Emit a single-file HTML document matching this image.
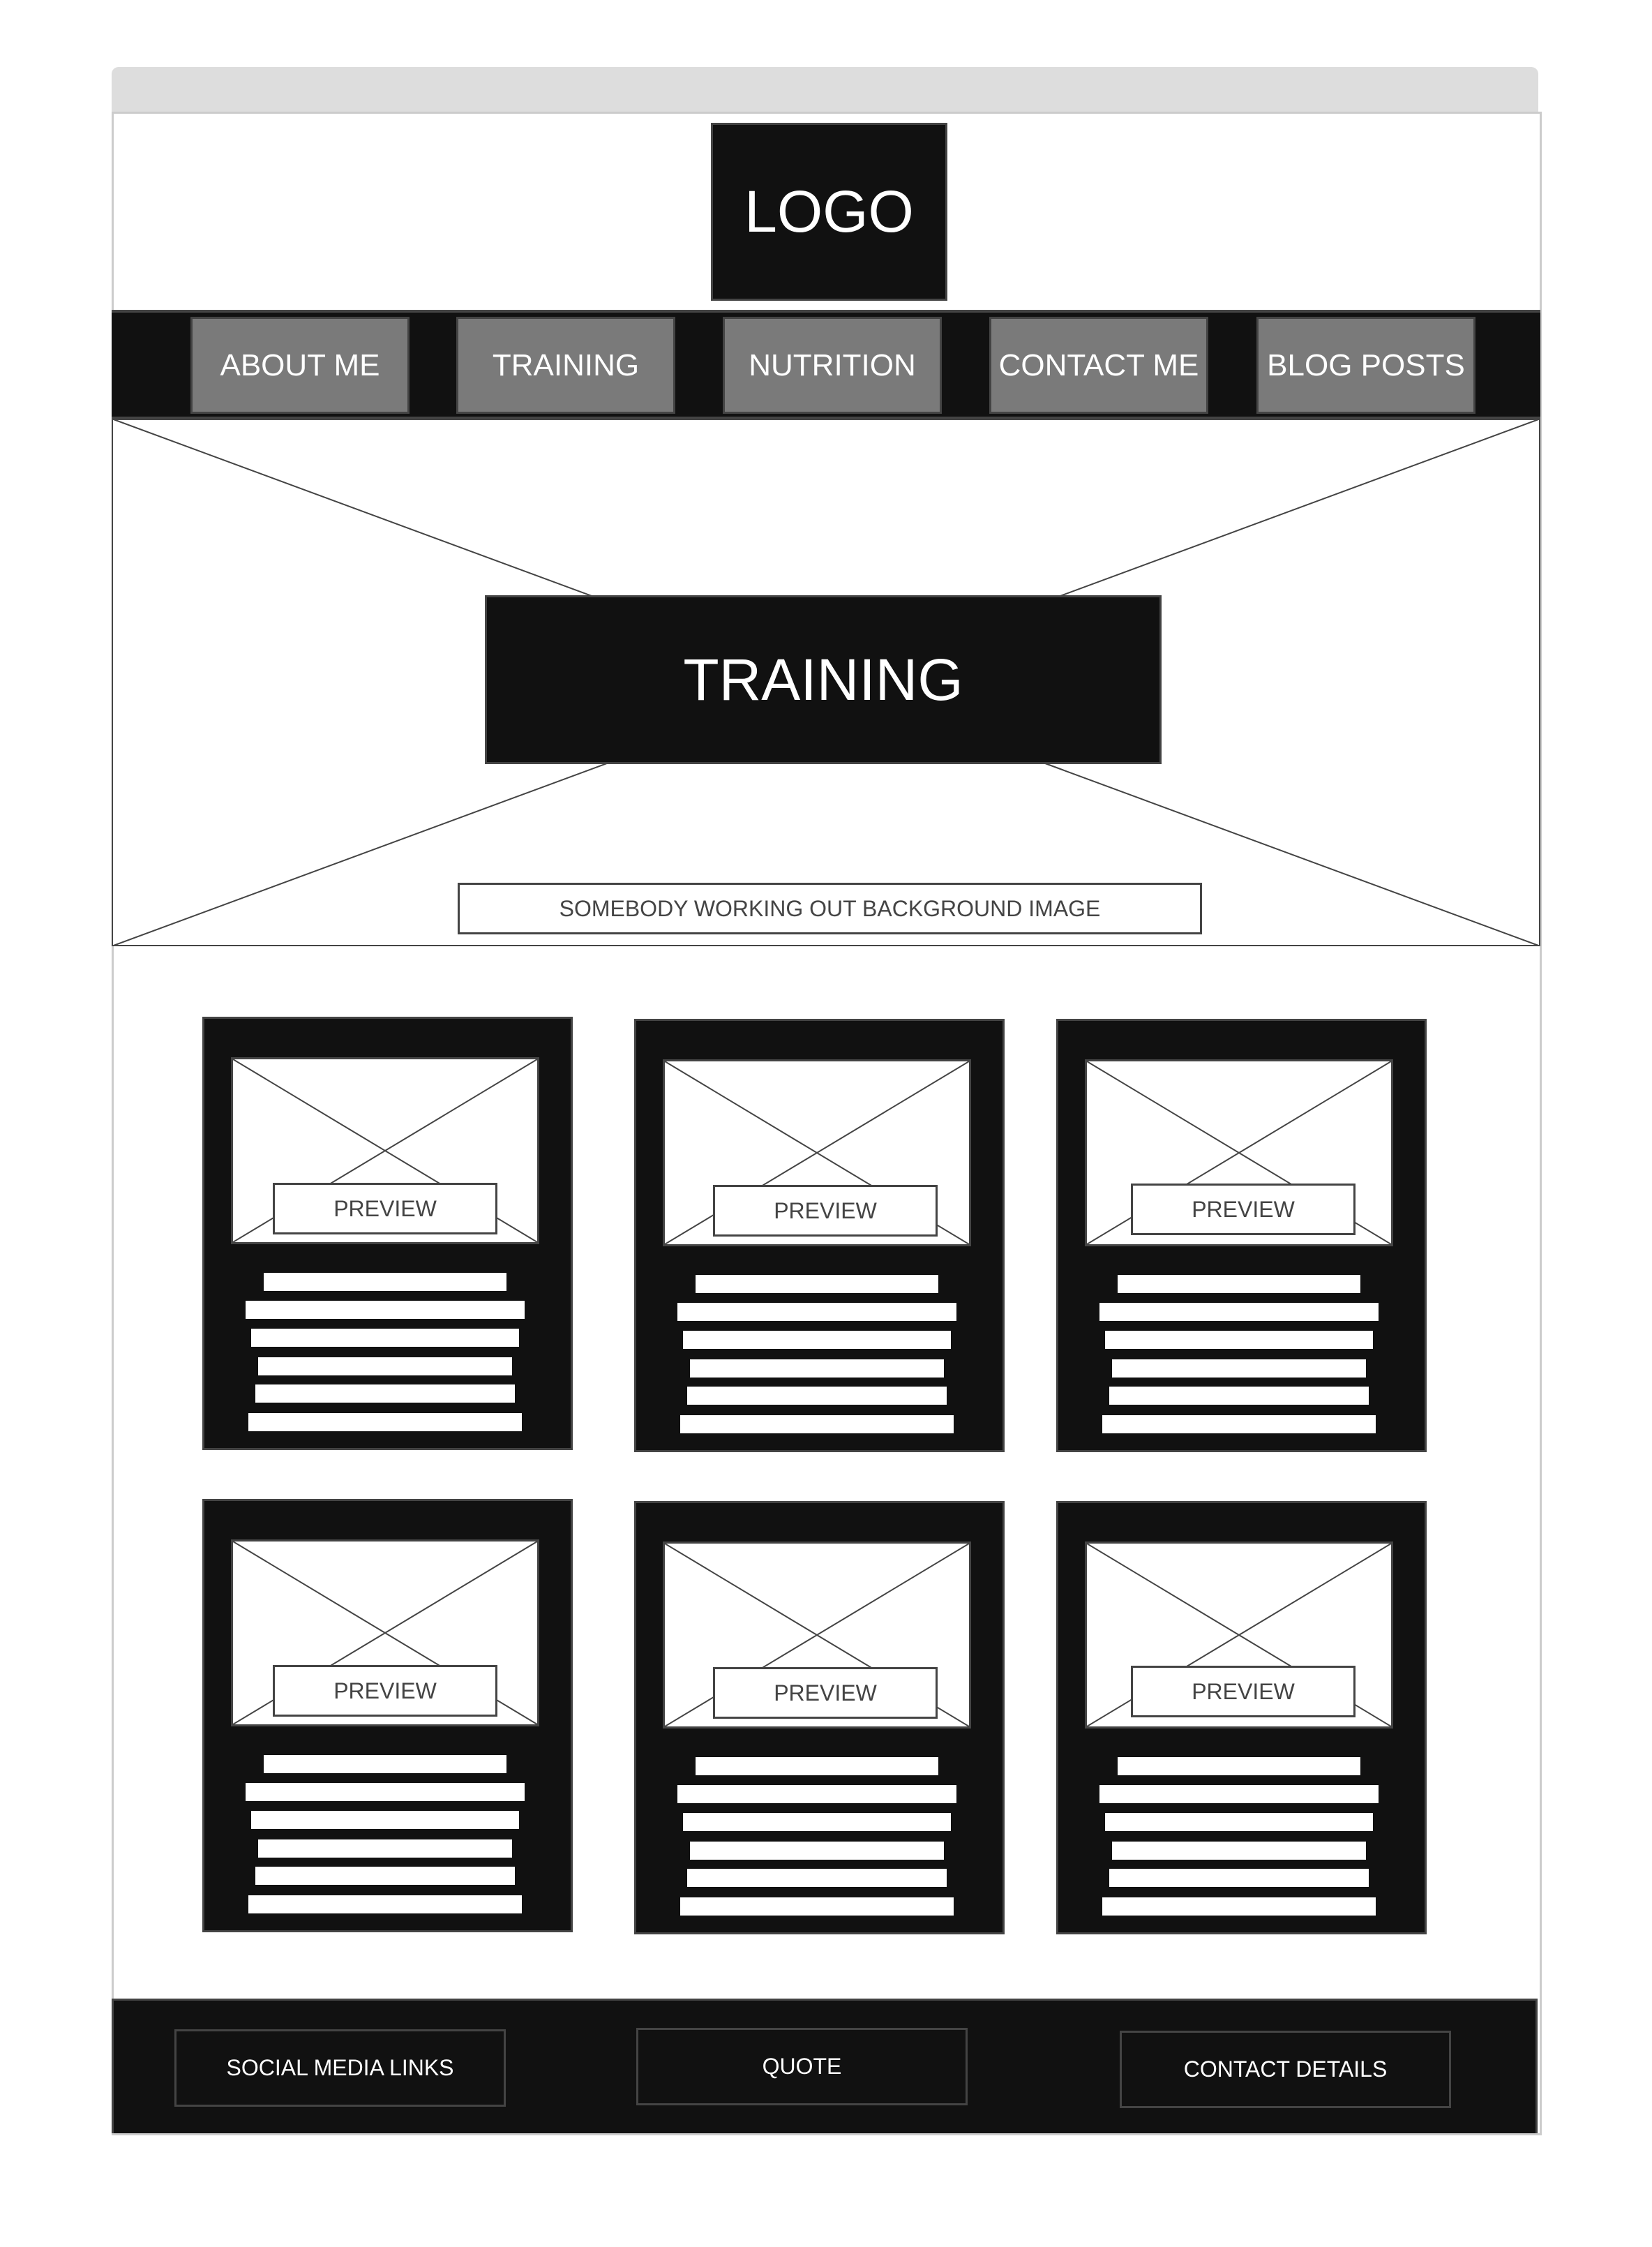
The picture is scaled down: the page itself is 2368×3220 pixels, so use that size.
<!DOCTYPE html>
<html><head><meta charset="utf-8"><style>
*{margin:0;padding:0;box-sizing:border-box}
body{width:2368px;height:3220px;background:#fff;position:relative;font-family:"Liberation Sans",sans-serif;overflow:hidden}
.a{position:absolute}
.c{display:flex;align-items:center;justify-content:center;text-align:center;white-space:nowrap}
.btn{position:absolute;top:454px;height:139px;width:314px;background:#7a7a7a;border:3px solid #444;color:#fff;font-size:44px}
.card{position:absolute;width:531px;height:621px;background:#111;outline:3px solid #444;outline-offset:-3px}
.img{position:absolute;left:41px;top:58px;width:442px;height:268px;background:#fff;border:3px solid #444}
.img svg{position:absolute;left:0;top:0}
.pv{position:absolute;top:238px;width:322px;height:74px;background:#fff;border:3px solid #444;color:#444;font-size:32px}
.bar{position:absolute;height:26px;background:#fff}
.fb{position:absolute;width:475px;height:111px;border:3px solid #444;color:#fff;font-size:32px}
</style></head><body>
<div class="a" style="left:160px;top:96px;width:2045px;height:66px;background:#ddd;border-radius:10px 10px 0 0"></div>
<div class="a" style="left:160px;top:160px;width:2050px;height:2900px;border:3px solid #ccc;background:#fff"></div>
<div class="a c" style="left:1019px;top:176px;width:339px;height:255px;background:#111;border:3px solid #444;color:#fff;font-size:84px">LOGO</div>
<div class="a" style="left:160px;top:444px;width:2048px;height:158px;background:#111;border-top:4px solid #444;border-bottom:5px solid #444"></div>
<div class="btn c" style="left:273px">ABOUT ME</div>
<div class="btn c" style="left:654px">TRAINING</div>
<div class="btn c" style="left:1036px">NUTRITION</div>
<div class="btn c" style="left:1418px">CONTACT ME</div>
<div class="btn c" style="left:1801px">BLOG POSTS</div>
<svg class="a" style="left:160px;top:600px" width="2048" height="756"><rect x="1" y="1" width="2046" height="754" fill="#fff" stroke="#444" stroke-width="2"/><line x1="0" y1="0" x2="2048" y2="756" stroke="#444" stroke-width="2"/><line x1="2048" y1="0" x2="0" y2="756" stroke="#444" stroke-width="2"/></svg>
<div class="a c" style="left:695px;top:853px;width:970px;height:242px;background:#111;border:3px solid #444;color:#fff;font-size:84px">TRAINING</div>
<div class="a c" style="left:656px;top:1265px;width:1067px;height:74px;background:#fff;border:3px solid #444;color:#444;font-size:32px">SOMEBODY WORKING OUT BACKGROUND IMAGE</div>

<div class="card" style="left:290px;top:1457px"><div class="img"><svg width="436" height="262"><line x1="0" y1="0" x2="436" y2="262" stroke="#444" stroke-width="2"/><line x1="436" y1="0" x2="0" y2="262" stroke="#444" stroke-width="2"/></svg></div><div class="pv c" style="left:101px">PREVIEW</div><div class="bar" style="left:88px;width:348px;top:367px"></div><div class="bar" style="left:62px;width:400px;top:407px"></div><div class="bar" style="left:70px;width:384px;top:447px"></div><div class="bar" style="left:80px;width:364px;top:488px"></div><div class="bar" style="left:76px;width:372px;top:527px"></div><div class="bar" style="left:66px;width:392px;top:568px"></div></div>
<div class="card" style="left:909px;top:1460px"><div class="img"><svg width="436" height="262"><line x1="0" y1="0" x2="436" y2="262" stroke="#444" stroke-width="2"/><line x1="436" y1="0" x2="0" y2="262" stroke="#444" stroke-width="2"/></svg></div><div class="pv c" style="left:113px">PREVIEW</div><div class="bar" style="left:88px;width:348px;top:367px"></div><div class="bar" style="left:62px;width:400px;top:407px"></div><div class="bar" style="left:70px;width:384px;top:447px"></div><div class="bar" style="left:80px;width:364px;top:488px"></div><div class="bar" style="left:76px;width:372px;top:527px"></div><div class="bar" style="left:66px;width:392px;top:568px"></div></div>
<div class="card" style="left:1514px;top:1460px"><div class="img"><svg width="436" height="262"><line x1="0" y1="0" x2="436" y2="262" stroke="#444" stroke-width="2"/><line x1="436" y1="0" x2="0" y2="262" stroke="#444" stroke-width="2"/></svg></div><div class="pv c" style="left:107px;top:236px">PREVIEW</div><div class="bar" style="left:88px;width:348px;top:367px"></div><div class="bar" style="left:62px;width:400px;top:407px"></div><div class="bar" style="left:70px;width:384px;top:447px"></div><div class="bar" style="left:80px;width:364px;top:488px"></div><div class="bar" style="left:76px;width:372px;top:527px"></div><div class="bar" style="left:66px;width:392px;top:568px"></div></div>

<div class="card" style="left:290px;top:2148px"><div class="img"><svg width="436" height="262"><line x1="0" y1="0" x2="436" y2="262" stroke="#444" stroke-width="2"/><line x1="436" y1="0" x2="0" y2="262" stroke="#444" stroke-width="2"/></svg></div><div class="pv c" style="left:101px">PREVIEW</div><div class="bar" style="left:88px;width:348px;top:367px"></div><div class="bar" style="left:62px;width:400px;top:407px"></div><div class="bar" style="left:70px;width:384px;top:447px"></div><div class="bar" style="left:80px;width:364px;top:488px"></div><div class="bar" style="left:76px;width:372px;top:527px"></div><div class="bar" style="left:66px;width:392px;top:568px"></div></div>
<div class="card" style="left:909px;top:2151px"><div class="img"><svg width="436" height="262"><line x1="0" y1="0" x2="436" y2="262" stroke="#444" stroke-width="2"/><line x1="436" y1="0" x2="0" y2="262" stroke="#444" stroke-width="2"/></svg></div><div class="pv c" style="left:113px">PREVIEW</div><div class="bar" style="left:88px;width:348px;top:367px"></div><div class="bar" style="left:62px;width:400px;top:407px"></div><div class="bar" style="left:70px;width:384px;top:447px"></div><div class="bar" style="left:80px;width:364px;top:488px"></div><div class="bar" style="left:76px;width:372px;top:527px"></div><div class="bar" style="left:66px;width:392px;top:568px"></div></div>
<div class="card" style="left:1514px;top:2151px"><div class="img"><svg width="436" height="262"><line x1="0" y1="0" x2="436" y2="262" stroke="#444" stroke-width="2"/><line x1="436" y1="0" x2="0" y2="262" stroke="#444" stroke-width="2"/></svg></div><div class="pv c" style="left:107px;top:236px">PREVIEW</div><div class="bar" style="left:88px;width:348px;top:367px"></div><div class="bar" style="left:62px;width:400px;top:407px"></div><div class="bar" style="left:70px;width:384px;top:447px"></div><div class="bar" style="left:80px;width:364px;top:488px"></div><div class="bar" style="left:76px;width:372px;top:527px"></div><div class="bar" style="left:66px;width:392px;top:568px"></div></div>

<div class="a" style="left:160px;top:2864px;width:2044px;height:193px;background:#111;border:3px solid #444;border-bottom:none"></div>
<div class="fb c" style="left:250px;top:2908px">SOCIAL MEDIA LINKS</div>
<div class="fb c" style="left:912px;top:2906px">QUOTE</div>
<div class="fb c" style="left:1605px;top:2910px">CONTACT DETAILS</div>
</body></html>
